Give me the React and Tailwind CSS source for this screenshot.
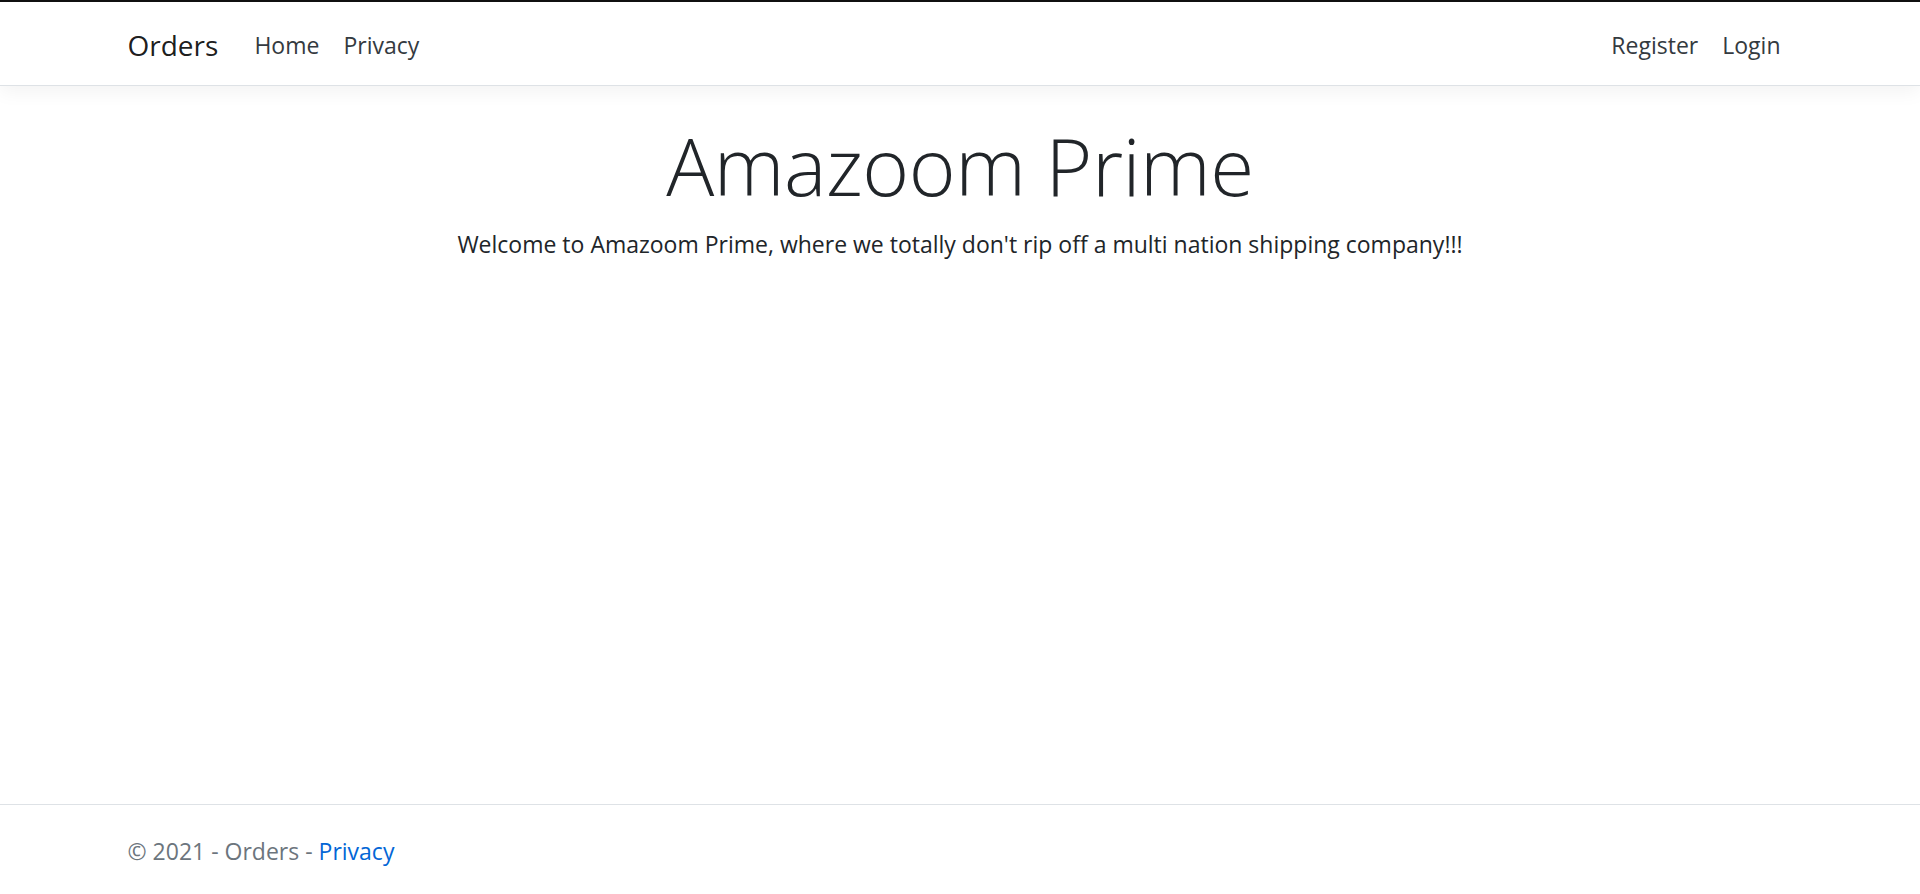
export default function App() {
  return (
    <div
      className="min-h-[894px] flex flex-col bg-white text-[#212529]"
      style={{ fontFamily: '"Segoe UI", "Open Sans", "Noto Sans", sans-serif' }}
    >
      <header className="border-t-2 border-[#111]">
        <nav className="h-[84px] bg-white border-b border-[#dee2e6] shadow-[0_6px_18px_rgba(0,0,0,0.05)]">
          <div className="w-[1710px] mx-auto px-[22.5px] h-full flex items-center pt-[3px]">
            <a className="text-[28px] text-black/90 mr-[24px] leading-none">Orders</a>
            <a className="px-[12px] text-[23px] text-[#343a40]">Home</a>
            <a className="px-[12px] text-[23px] text-[#343a40]">Privacy</a>
            <div className="ml-auto flex">
              <a className="px-[12px] text-[23px] text-[#343a40]">Register</a>
              <a className="px-[12px] text-[23px] text-[#343a40]">Login</a>
            </div>
          </div>
        </nav>
      </header>

      <main className="mt-[31px] text-center">
        <h1 className="text-[80px] font-light leading-[1.2] tracking-[-0.5px] mb-[14px]">Amazoom Prime</h1>
        <p className="text-[23px] leading-[1.5]">
          Welcome to Amazoom Prime, where we totally don't rip off a multi nation shipping company!!!
        </p>
      </main>

      <footer className="mt-auto border-t border-[#dee2e6] h-[90px] text-[#6c757d]">
        <div className="w-[1710px] mx-auto px-[22.5px] h-full flex items-center pt-[3px] text-[23px]">
          © 2021 - Orders -&nbsp;<a className="text-[#0366d6]">Privacy</a>
        </div>
      </footer>
    </div>
  );
}
